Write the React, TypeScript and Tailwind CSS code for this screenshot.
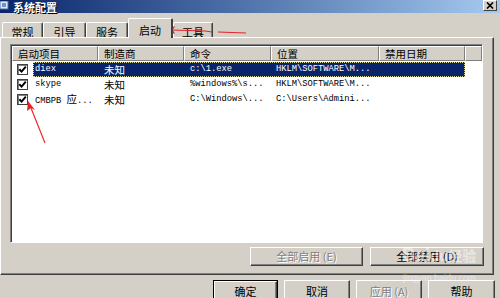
const CJK = "font-['SimSun','Noto_Sans_CJK_SC',sans-serif]"
const MONO = "font-['Liberation_Mono','Noto_Sans_CJK_SC',monospace]"

interface Row {
  name: React.ReactNode
  maker: string
  cmd: string
  loc: string
  selected?: boolean
}

const rows: Row[] = [
  { name: 'diex', maker: '未知', cmd: 'c:\\1.exe', loc: 'HKLM\\SOFTWARE\\M...', selected: true },
  { name: 'skype', maker: '未知', cmd: '%windows%\\s...', loc: 'HKLM\\SOFTWARE\\M...' },
  {
    name: (
      <>
        CMBPB <span className={`${CJK} text-[10.5px]`}>应</span>...
      </>
    ),
    maker: '未知',
    cmd: 'C:\\Windows\\...',
    loc: 'C:\\Users\\Admini...',
  },
]

const headers = [
  { label: '启动项目', w: 'w-[86px]' },
  { label: '制造商', w: 'w-[86px]' },
  { label: '命令', w: 'w-[87px]' },
  { label: '位置', w: 'w-[108px]' },
  { label: '禁用日期', w: 'w-[86px]' },
  { label: '', w: 'w-[17px]' },
]

function Checkbox() {
  return (
    <div className="flex h-[11px] w-[11px] items-center justify-center border border-[#404040] bg-white shadow-[inset_1px_1px_0_#808080]">
      <svg width="9" height="9" viewBox="0 0 9 9">
        <path d="M1.3 4.2 L3.6 6.6 L7.8 1.6" stroke="#000" strokeWidth="2" fill="none" />
      </svg>
    </div>
  )
}

function WinButton({
  children,
  disabled,
  isDefault,
  className = '',
}: {
  children: React.ReactNode
  disabled?: boolean
  isDefault?: boolean
  className?: string
}) {
  return (
    <div className={`${isDefault ? 'border border-black' : ''} ${className}`}>
      <div
        className={`flex h-full w-full items-center justify-center border border-t-white border-l-white border-r-[#404040] border-b-[#404040] shadow-[inset_-1px_-1px_0_#808080] ${CJK} text-[11px] ${
          disabled ? 'text-[#808080] [text-shadow:1px_1px_0_#fff]' : 'text-black'
        }`}
      >
        {children}
      </div>
    </div>
  )
}

function Tab({ label, active, w }: { label: string; active?: boolean; w: string }) {
  if (active) {
    return (
      <div
        className={`relative z-10 -mb-px flex h-[20px] ${w} items-start justify-center rounded-t-[2px] border-l border-t border-white border-r-2 border-r-[#404040] bg-[#d4d0c8] pt-[3px] ${CJK} text-[11px] text-black`}
      >
        {label}
      </div>
    )
  }
  return (
    <div
      className={`flex h-[15px] ${w} items-start justify-center rounded-t-[2px] border-l border-t border-white border-r border-r-[#404040] shadow-[inset_-1px_0_0_#808080] pt-[1px] ${CJK} text-[11px] text-black`}
    >
      {label}
    </div>
  )
}

export default function App() {
  return (
    <div className="relative flex h-[298px] w-[500px] flex-col overflow-hidden bg-[#d4d0c8]">
      {/* title bar */}
      <div className="flex h-[13px] shrink-0 items-center bg-gradient-to-r from-[#0a246a] to-[#a6caf0]">
        <svg width="10" height="11" viewBox="0 0 10 11" className="shrink-0">
          <rect x="0" y="0" width="8" height="8" fill="#dfe8f5" stroke="#4a6fa8" />
          <rect x="2" y="2" width="4" height="4" fill="#6a94d4" />
        </svg>
        <span className={`ml-[3px] ${CJK} text-[11px] font-bold leading-[12px] text-white [text-shadow:1px_1px_0_#000]`}>
          系统配置
        </span>
        <div className="ml-auto mr-[3px] flex h-[11px] w-[14px] items-center justify-center self-start border border-t-white border-l-white border-r-[#404040] border-b-[#404040] bg-[#d4d0c8]">
          <svg width="8" height="7" viewBox="0 0 8 7">
            <path d="M1 0.5 L7 6.5 M7 0.5 L1 6.5" stroke="#000" strokeWidth="1.6" />
          </svg>
        </div>
      </div>

      {/* tabs */}
      <div className="flex h-[24px] shrink-0 items-end pl-[2px]">
        <Tab label="常规" w="w-[41px]" />
        <Tab label="引导" w="w-[43px]" />
        <Tab label="服务" w="w-[42px]" />
        <Tab label="启动" w="w-[45px]" active />
        <Tab label="工具" w="w-[40px]" />
      </div>

      {/* tab panel */}
      <div className="flex h-[238px] w-[494px] shrink-0 flex-col border border-t-white border-l-white border-r-[#404040] border-b-[#404040] shadow-[inset_-1px_-1px_0_#808080]">
        <div className="ml-[9px] mt-[6px] flex h-[199px] w-[473px] flex-col border border-t-[#808080] border-l-[#808080] border-b-white border-r-white bg-white shadow-[inset_1px_1px_0_#404040]">
          <div className="ml-px mt-px flex h-[15px] shrink-0">
            {headers.map((h, i) => (
              <div
                key={i}
                className={`${h.w} shrink-0 border border-t-white border-l-white border-r-[#808080] border-b-[#808080] bg-[#d4d0c8] pl-[5px] ${CJK} text-[10.5px] leading-[13px] text-black`}
              >
                {h.label}
              </div>
            ))}
          </div>
          <div className="ml-px flex flex-col pt-px">
            {rows.map((r, i) => (
              <div key={i} className="flex h-[15px] items-center">
                <div className="flex w-[21px] shrink-0 pl-[5px]">
                  <Checkbox />
                </div>
                <div
                  className={`flex h-full w-[432px] items-center ${MONO} text-[8.75px] ${
                    r.selected
                      ? 'border border-dotted border-[#d8d8a0] bg-[#0a246a] text-white'
                      : 'border border-transparent text-black'
                  }`}
                >
                  <div className="w-[64px] shrink-0 whitespace-nowrap pl-px">{r.name}</div>
                  <div className={`w-[86px] shrink-0 pl-[6px] ${CJK} text-[10.5px]`}>{r.maker}</div>
                  <div className="w-[87px] shrink-0 whitespace-nowrap pl-[6px]">{r.cmd}</div>
                  <div className="w-[108px] shrink-0 whitespace-nowrap pl-[5px]">{r.loc}</div>
                  <div className="w-[86px] shrink-0" />
                </div>
              </div>
            ))}
          </div>
        </div>

        <div className="mr-[9px] mt-[4px] flex justify-end gap-[7px]">
          <WinButton disabled className="h-[19px] w-[113px]">
            全部启用 (E)
          </WinButton>
          <WinButton className="h-[19px] w-[114px]">全部禁用 (D)</WinButton>
        </div>
      </div>

      {/* dialog buttons */}
      <div className="flex gap-[6px] pl-[213px] pt-[5px]">
        <WinButton isDefault className="h-[22px] w-[65px]">
          确定
        </WinButton>
        <WinButton className="h-[22px] w-[66px]">取消</WinButton>
        <WinButton disabled className="h-[22px] w-[66px]">
          应用 (A)
        </WinButton>
        <WinButton className="h-[22px] w-[67px]">帮助</WinButton>
      </div>

      {/* annotation arrows */}
      <svg className="pointer-events-none absolute left-0 top-0" width="500" height="298">
        <path d="M172 30 L205 31 L212 32 M218 32 L246 33" stroke="#e8202a" strokeWidth="1.2" fill="none" />
        <path d="M164 30 L175 26 L173 30 L175 34 Z" fill="#ee1c24" />
        <path d="M45 143 L31 108" stroke="#ee2a30" strokeWidth="1.2" fill="none" />
        <path d="M28 101 L35 110 L31 108 L27 111 Z" fill="#ee1c24" />
      </svg>

      {/* watermark */}
      <div className="pointer-events-none absolute left-[402px] top-[246px] flex flex-col items-center text-white/50">
        <span className="font-['Liberation_Sans',sans-serif] text-[18px] font-bold leading-none">
          Bai<span className="text-[15px]">du</span>
          <span className={`${CJK} text-[14px]`}>经验</span>
        </span>
        <span className="mt-[10px] font-['Liberation_Sans',sans-serif] text-[9px] leading-none">jingyan.baidu.com</span>
      </div>
    </div>
  )
}
